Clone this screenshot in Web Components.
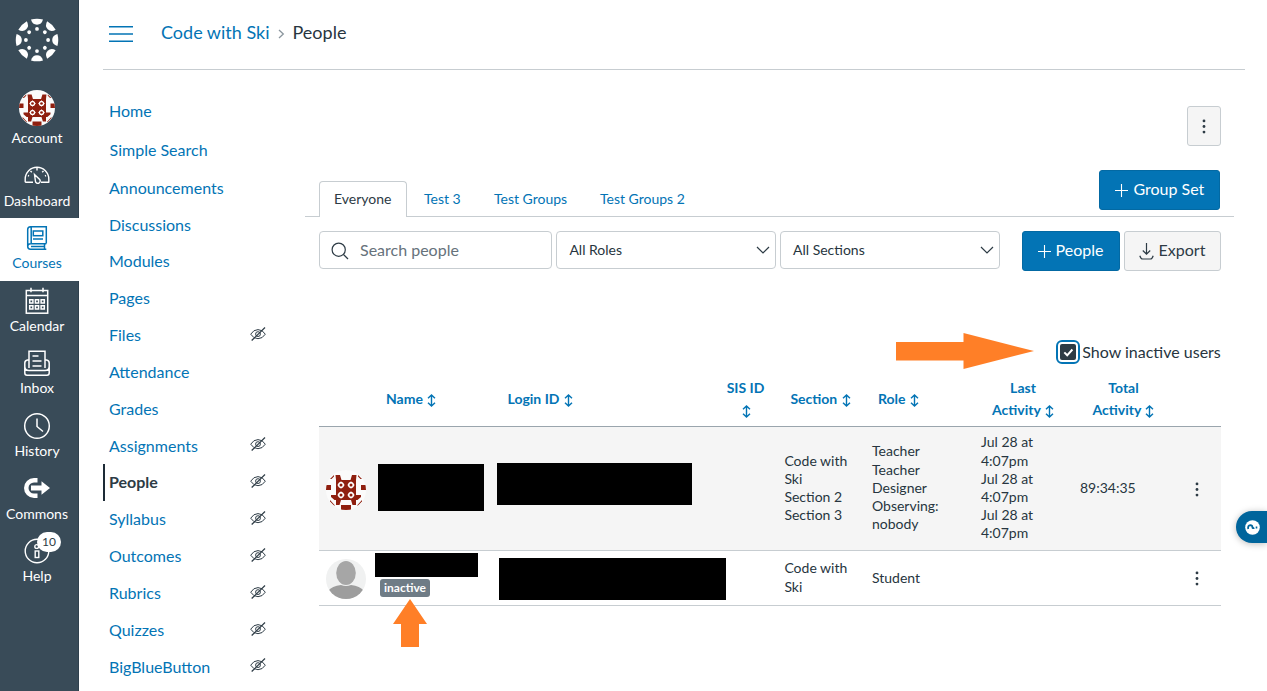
<!DOCTYPE html>
<html lang="en">
<head>
<meta charset="utf-8">
<title>People</title>
<style>
html,body{margin:0;height:100%;overflow:hidden;background:#fff}
body{font-family:Lato,"Liberation Sans",sans-serif;color:#273540}
</style>
</head>
<body>
<people-app></people-app>
<script>
const define=(name,html,setup)=>customElements.define(name,class extends HTMLElement{
  connectedCallback(){
    if(this.shadowRoot)return;
    const t=document.createElement('template');
    t.innerHTML=typeof html==='function'?html(this):html;
    this.attachShadow({mode:'open'}).append(t.content.cloneNode(true));
    if(setup)setup(this);
  }
});

const ring=(x,y)=>`<path d="M${x} ${y-3.7}l3.700 3.700-3.700 3.700-3.700-3.700z" fill="#fff"/><circle cx="${x}" cy="${y}" r="2.900" fill="#fff"/><circle cx="${x}" cy="${y}" r="1.500" fill="#8f1f0f"/>`;
const identicon=`<defs><clipPath id="c"><circle cx="20" cy="20" r="20"/></clipPath></defs><g clip-path="url(#c)"><rect width="40" height="40" fill="#fbfbfb"/>
<path fill="#8f1f0f" d="M10 10h20v20H10zM9.500 5H14L15.500 10H10zM30.500 5H26L24.500 10H30zM0 15h5v5H0zM35 15h5v5h-5zM15 35h10v5H15zM5 25h5v5H8.500L5 27zM35 25h-5v5h1.500L35 27zM10 30h5l-1.500 5H10zM30 30h-5l1.500 5H30zM4 9l4-4v1.500L5.500 9zM36 9l-4-4v1.500L34.500 9zM4 30l5 5.500H8L4 31.500zM36 30l-5 5.500h1l4-4z"/>
${ring(15,15)}${ring(25,15)}${ring(15,25)}${ring(25,25)}</g>`;

const petals=[...Array(8)].map((_,i)=>`<g transform="rotate(${i*45} 22 22)"><path d="M16 1.6Q22 -.1 28 1.6Q26.600 6.800 22 6.800Q17.400 6.800 16 1.600z"/><circle cx="22" cy="10.900" r="1.900"/></g>`).join('');

const icons={
  logo:[44,44,`<g fill="#fff">${petals}</g>`],
  account:[36,36,identicon,'0 0 40 40'],
  identicon:[40,40,identicon],
  person:[40,40,`<defs><clipPath id="c"><circle cx="20" cy="20" r="20"/></clipPath></defs><g clip-path="url(#c)"><rect width="40" height="40" fill="#f0f1f1"/><path d="M2 32Q6 27 15 26Q20 28 25 26Q34 27 38 32V40H2z" fill="#9d9d9d"/><ellipse cx="20" cy="14" rx="9.800" ry="12" fill="#a6a6a6"/></g>`],
  dashboard:[28,20,`<g fill="none" stroke="#fff" stroke-width="1.400"><path d="M2.200 17.300V14A11.800 11.800 0 0 1 25.800 14V17.300H18M10 17.300H2.200" stroke-linejoin="round"/><path d="M11.500 9.500L16.700 14.500A2.400 2.400 0 1 1 12.400 16z"/><path d="M14 3v2.500M7.500 6l1.300 1.300M20.500 6l-1.300 1.300M5 10.500l1 .5M23 10.500l-1 .5"/></g>`],
  courses:[22,26,`<g fill="none" stroke="#0374b5" stroke-width="1.500"><path d="M20.300 18.500V1.800H4.500Q1.700 1.800 1.700 4.600V21.200Q1.700 24.200 4.500 24.200H20.300M20.300 18.700H4.500Q1.700 18.700 1.700 21.400M5.200 2v16.500M18.500 18.700v5.500M5 21.500h13"/><rect x="7.300" y="6" width="9.500" height="4.700"/><path d="M7 14h10"/></g>`],
  calendar:[24,28,`<g fill="none" stroke="#fff" stroke-width="1.500"><rect x="1.300" y="3.500" width="21.400" height="22.700"/><path d="M1.300 8.500h21.400M6 .8v4.500M18 .8v4.500"/><path d="M4.700 12.700h3.200v3.200H4.700zM10.400 12.700h3.200v3.200h-3.200zM16.100 12.700h3.200v3.200h-3.200zM4.700 18.800h3.200v3.200H4.700zM10.400 18.800h3.200v3.200h-3.200zM16.100 18.800h3.200v3.200h-3.200z"/></g>`],
  inbox:[28,28,`<g fill="none" stroke="#fff" stroke-width="1.500"><path d="M6 19V2.200h16V19M6 11H4.500Q1.800 11.500 1.800 14v10Q1.800 26.200 4 26.200h20Q26.200 26.200 26.200 24V14Q26.200 11.500 23.500 11H22M1.800 17.500Q2 21.500 6 21.500h16Q26 21.500 26.200 17.500"/><path d="M9.500 7h6M9.500 12h9M9.500 17h9"/></g>`],
  history:[28,28,`<g fill="none" stroke="#fff" stroke-width="1.500"><circle cx="14" cy="14" r="12.300"/><path d="M14 6.500v8l6 5"/></g>`],
  commons:[28,22,`<path d="M14.500 1H11A10 10 0 0 0 11 21h3.500v-4.500H11A5.500 5.500 0 0 1 11 5.500h3.500z" fill="#fff"/><path d="M8 8.600h10.500V4.200L27 11l-8.500 6.800v-4.400H8z" fill="#fff"/>`],
  help:[26,26,`<g fill="none" stroke="#fff" stroke-width="1.400"><circle cx="13" cy="13" r="11.800"/><rect x="11.200" y="13" width="3.600" height="6.500"/><circle cx="12.700" cy="8.500" r="1.900"/></g>`],
  menu:[24,18,`<path d="M0 1.700h24M0 9h24M0 16.300h24" stroke="#0374b5" stroke-width="1.600"/>`],
  chevron:[7,10,`<path d="M1 1l4.300 4L1 9" fill="none" stroke="#8b969e" stroke-width="1.300"/>`],
  eye:[16,14,`<g fill="none" stroke="#2d3b45" stroke-width="1"><path d="M.7 7.200Q3.500 2.600 8 2.600T15.300 7.200Q12.500 11.700 8 11.700T.7 7.200z"/><circle cx="8" cy="7.100" r="2.400"/><path d="M1.700 13.500L15 .5" stroke-width="1.200"/></g>`],
  search:[18,18,`<g fill="none" stroke="#2d3b45" stroke-width="1.200"><circle cx="7.700" cy="7.700" r="6.600"/><path d="M12.500 12.500l4.500 4.500"/></g>`],
  down:[14,8,`<path d="M1 1l6 6 6-6" fill="none" stroke="#2d3b45" stroke-width="1.200"/>`],
  plus:[13,13,`<path d="M6.500 0v13M0 6.500h13" stroke="#fff" stroke-width="1.100"/>`],
  export:[15,17,`<path d="M7.500 0v11M3.800 7.500l3.700 3.700 3.700-3.700M.8 12.800q1 3.200 2.900 3.200h7.600q1.900 0 2.900-3.200" fill="none" stroke="#2d3b45" stroke-width="1.200"/>`],
  sort:[9,13,`<path d="M4.500 1.200v10.600M1 4.300l3.500-3.300L8 4.300M1 8.700l3.500 3.300L8 8.700" fill="none" stroke="#0374b5" stroke-width="1.400"/>`],
  kebab:[4,15,`<g fill="#2d3b45"><circle cx="2" cy="1.900" r="1.400"/><circle cx="2" cy="7.500" r="1.400"/><circle cx="2" cy="13.100" r="1.400"/></g>`],
  check:[11,9,`<path d="M1.300 4.400l2.900 2.900 5.200-5.800" fill="none" stroke="#fff" stroke-width="2"/>`],
  right:[138,36,`<path d="M0 9h67.500V0L138 18 67.500 36V27.500H0z" fill="#ff7f27"/>`],
  up:[34,48,`<path d="M17 0l17 25h-8v23H8V25H0z" fill="#ff7f27"/>`],
  question:[15,15,`<circle cx="7.500" cy="7.500" r="7.300" fill="#fff"/><path d="M3.200 9Q2.600 5.300 5.300 5.200Q7.300 5.300 7.400 7.100T9.300 7.800M10.700 7.500h1.600" fill="none" stroke="#00659c" stroke-width="1.800"/>`]
};
define('ui-icon',el=>{const [w,h,g,vb]=icons[el.getAttribute('name')];
  return `<style>:host{display:block;flex:none;width:${w}px;height:${h}px}svg{display:block}</style><svg width="${w}" height="${h}" viewBox="${vb||`0 0 ${w} ${h}`}">${g}</svg>`});

define('nav-item',el=>`<style>
:host{display:block;box-sizing:border-box;height:62.6px;width:79px;padding-right:5px;color:#fff;font-size:14px;line-height:18px;text-align:center}
:host([active]){background:#fff;color:#0374b5}
.i{height:36px;padding-top:2px;display:flex;align-items:center;justify-content:center;position:relative}
:host([icon=account]) ui-icon{margin-top:-10px}
.b{position:absolute;left:37px;top:1.500px;min-width:24px;height:20px;border-radius:10px;background:#fff;color:#2d3b45;font-size:12px;line-height:20px}
.l{white-space:nowrap;margin-top:-1.700px}
</style><div class="i"><ui-icon name="${el.getAttribute('icon')}"></ui-icon>${el.hasAttribute('badge')?`<span class="b">${el.getAttribute('badge')}</span>`:''}</div><div class="l"><slot></slot></div>`);

define('global-nav',`<style>
:host{display:flex;flex-direction:column;box-sizing:border-box;width:79px;height:691px;background:#394b58;flex:none;box-shadow:inset -1px 0 #2f404d}
.logo{height:92.800px;box-sizing:border-box;padding:18px 0 0 15px}
</style><div class="logo"><ui-icon name="logo"></ui-icon></div>
<nav-item icon="account">Account</nav-item><nav-item icon="dashboard">Dashboard</nav-item><nav-item icon="courses" active>Courses</nav-item><nav-item icon="calendar">Calendar</nav-item><nav-item icon="inbox">Inbox</nav-item><nav-item icon="history">History</nav-item><nav-item icon="commons">Commons</nav-item><nav-item icon="help" badge="10">Help</nav-item>`);

define('crumb-bar',`<style>
:host{display:flex;align-items:center;box-sizing:border-box;height:70px;margin:0 22.500px 0 24px;padding:0 0 5px 6px;border-bottom:1px solid #c7cdd1;font-size:18px;line-height:24px}
.a{color:#0374b5;margin-left:28px}ui-icon{position:relative;top:2px}.c{margin:0 8px}
</style><ui-icon name="menu"></ui-icon><span class="a">Code with Ski</span><ui-icon class="c" name="chevron"></ui-icon><span>People</span>`);

define('course-link',el=>`<style>
:host{display:flex;box-sizing:border-box;height:36.83px;align-items:center;justify-content:space-between;padding-left:6px;width:162.600px;color:#0374b5;font-size:16px;line-height:20px}
:host([active]){color:#2d3b45;font-weight:700;border-left:2px solid #1d2b36;padding-left:4px}
ui-icon{position:relative;top:-1.200px}
</style><slot></slot>${el.hasAttribute('hidden-item')?'<ui-icon name="eye"></ui-icon>':''}`);

define('course-nav',`<style>:host{display:block;width:202px;padding:23px 0 0 24px;box-sizing:border-box;flex:none}</style>`
+[['Home'],['Simple Search'],['Announcements'],['Discussions'],['Modules'],['Pages'],['Files',1],['Attendance'],['Grades'],['Assignments',1],['People',1],['Syllabus',1],['Outcomes',1],['Rubrics',1],['Quizzes',1],['BigBlueButton',1]]
.map(([t,h],i)=>`<course-link ${h?'hidden-item':''} ${t=='People'?'active':''} style="${i==0?'margin-bottom:2.200px':i==1?'margin-bottom:.5px;padding-left:6.600px':''}">${t}</course-link>`).join(''));

define('ui-button',el=>`<style>
:host{display:flex;box-sizing:border-box;height:40px;align-items:center;justify-content:center;gap:5px;border:1px solid #c7cdd1;border-radius:3px;background:#f5f5f5;color:#2d3b45;font-size:16px;line-height:20px;white-space:nowrap}
:host([primary]){background:#0374b5;border-color:#0369a3;color:#fff}
span{margin-top:-2px}
</style><ui-icon name="${el.getAttribute('icon')}"></ui-icon><span><slot></slot></span>`);

define('ui-select',`<style>
:host{display:flex;box-sizing:border-box;width:220px;height:38px;align-items:center;justify-content:space-between;padding:0 5px 0 12px;border:1px solid #c7cdd1;border-radius:4px;font-size:14px;line-height:20px}
</style><slot></slot><ui-icon name="down"></ui-icon>`);

define('people-tabs',`<style>
:host{display:flex;box-sizing:border-box;height:47px;margin-right:32.600px;padding:0 14px;border-bottom:1px solid #c7cdd1;align-items:flex-end;font-size:14px;line-height:18px;color:#0374b5}
.t{height:36px;box-sizing:border-box;padding-top:9.500px;white-space:nowrap}
.on{width:87.600px;text-align:center;border:1px solid #c7cdd1;border-bottom:0;border-radius:4px 4px 0 0;background:#fff;color:#2d3b45;margin-bottom:-1px;padding-top:8px}
ui-button{width:121px;margin-left:auto;margin-bottom:6px}
</style><div class="t on">Everyone</div><div class="t" style="margin-left:17.400px;width:70px">Test 3</div><div class="t" style="width:106px">Test Groups</div><div class="t">Test Groups 2</div><ui-button primary icon="plus">Group Set</ui-button>`);

define('people-filters',`<style>
:host{display:flex;align-items:flex-start;margin:14px 46.500px 0 14px;height:40px;gap:4px}
.s{display:flex;align-items:center;gap:11px;box-sizing:border-box;width:233.400px;height:38px;border:1px solid #c7cdd1;border-radius:4px;padding-left:11px;font-size:16px;color:#66727b}
.s span{margin-top:-2px}ui-select+ui-select{margin-left:-.4px}
ui-icon{position:relative;top:1px}
</style><div class="s"><ui-icon name="search"></ui-icon><span>Search people</span></div><ui-select>All Roles</ui-select><ui-select>All Sections</ui-select><ui-button primary icon="plus" style="width:98px;margin-left:auto">People</ui-button><ui-button icon="export" style="width:97px">Export</ui-button>`);

define('inactive-toggle',`<style>
:host{display:flex;justify-content:flex-end;align-items:center;height:24px;margin:69px 46.200px 0 0;gap:2px;font-size:16px;line-height:20px}
.b{width:24px;height:24px;box-sizing:border-box;border:2px solid #0374b5;border-radius:6px;padding:2px}
.b div{height:16px;border-radius:2px;background:#2d3b45;display:flex;align-items:center;justify-content:center}
</style><div class="b"><div><ui-icon name="check"></ui-icon></div></div><span>Show inactive users</span>`);

define('sort-head',`<style>
:host{display:block;color:#0374b5;font-size:14px;font-weight:700;line-height:22px;text-align:center}
ui-icon{display:inline-block;vertical-align:-2.500px;margin-left:1px}
</style><slot></slot> <ui-icon name="sort"></ui-icon>`);

define('people-row',`<style>
:host{display:grid;grid-template-columns:56px 121px 224px 64.400px 87.600px 109px 99px 95px 45px;align-items:center;box-sizing:border-box;font-size:14px;line-height:18.200px;border-bottom:1px solid #c7cdd1}
</style><slot></slot>`);

define('redacted-box',el=>`<style>:host{display:block;background:#000;width:${el.getAttribute('w')}px;height:${el.getAttribute('h')}px}</style>`);
define('state-badge',`<style>:host{display:block;box-sizing:border-box;width:50px;height:18px;margin:2px 0 0 5px;border-radius:3px;background:#6f7c86;color:#fff;font-size:12px;font-weight:700;line-height:17px;text-align:center}</style><slot></slot>`);

define('people-table',`<style>
:host{display:block;margin:13px 46.500px 0 14px}
.h{height:50px;padding-bottom:6px;border-bottom-color:#9aa5ad}
.a{height:124px;background:#f5f5f5}
.b{height:55px}
ui-icon[name=kebab]{margin:1px 0 0 20.500px}
.u{margin-top:-1px}
.n{align-self:start;padding-top:2px}
</style>
<people-row class="h"><i></i><sort-head style="text-align:left;padding-left:11px">Name</sort-head><sort-head style="text-align:left;padding-left:11.500px">Login ID</sort-head><sort-head style="width:51px">SIS ID<br></sort-head><sort-head style="text-align:left;padding-left:6px">Section</sort-head><sort-head style="text-align:left;padding-left:6px">Role</sort-head><sort-head style="width:84px">Last<br>Activity</sort-head><sort-head style="width:87px">Total<br>Activity</sort-head></people-row>
<people-row class="a"><ui-icon name="identicon" style="margin:2px 0 0 7px"></ui-icon><redacted-box w="106" h="47" style="margin:-3px 0 0 3px"></redacted-box><redacted-box w="195.5" h="42" style="margin:-9px 0 0 .5px"></redacted-box><i></i><div class="u">Code with<br>Ski<br>Section 2<br>Section 3</div><div class="u">Teacher<br>Teacher<br>Designer<br>Observing:<br>nobody</div><div class="u">Jul 28 at<br>4:07pm<br>Jul 28 at<br>4:07pm<br>Jul 28 at<br>4:07pm</div><div>89:34:35</div><ui-icon name="kebab"></ui-icon></people-row>
<people-row class="b"><ui-icon name="person" style="margin:1px 0 0 7px"></ui-icon><div class="n"><redacted-box w="103" h="24" style="margin-left:-.5px"></redacted-box><state-badge>inactive</state-badge></div><redacted-box w="226.5" h="42" style="margin:2px 0 0 3px"></redacted-box><i></i><div class="u">Code with<br>Ski</div><div>Student</div><i></i><i></i><ui-icon name="kebab"></ui-icon></people-row>`);

define('people-page',`<style>
:host{display:block;flex:1;padding:36px 0 0 24px;min-width:0}
.k{display:flex;justify-content:flex-end;margin:0 46.500px 24px 0}
.k ui-button{width:34px}
</style><div class="k"><ui-button icon="kebab" style="gap:0"></ui-button></div><people-tabs></people-tabs><people-filters></people-filters><inactive-toggle></inactive-toggle><people-table></people-table>`);

define('side-tab',`<style>:host{display:flex;align-items:center;box-sizing:border-box;width:31px;height:32px;padding-left:9px;border-radius:16px 0 0 16px;background:#00659c;box-shadow:0 1px 7px #0004}</style><ui-icon name="question"></ui-icon>`);

define('people-app',`<style>
:host{display:flex;width:1267px;height:691px;position:relative;overflow:hidden;background:#fff}
.m{flex:1;min-width:0}.r{display:flex}
.o{position:absolute}
</style><global-nav></global-nav><div class="m"><crumb-bar></crumb-bar><div class="r"><course-nav></course-nav><people-page></people-page></div></div>
<ui-icon class="o" name="right" style="left:896px;top:333px"></ui-icon><ui-icon class="o" name="up" style="left:393px;top:599px"></ui-icon><side-tab class="o" style="left:1236px;top:511px"></side-tab>`);
</script>
</body>
</html>
